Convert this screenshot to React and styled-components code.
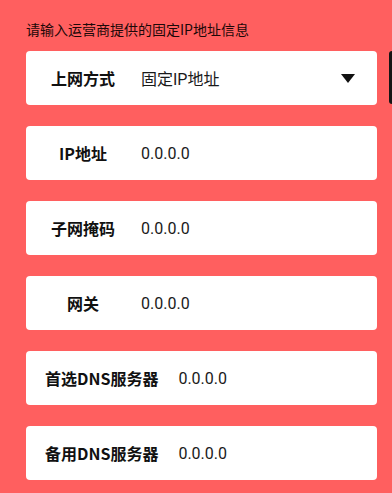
import React from 'react';
import styled, { createGlobalStyle } from 'styled-components';

const GlobalStyle = createGlobalStyle`
	html, body {
		margin: 0;
		padding: 0;
		background: #ff5f5f;
	}
	body {
		font-family: Roboto, "Noto Sans CJK SC", sans-serif;
	}
`;

const Page = styled.div`
	position: relative;
	min-height: 493px;
	box-sizing: border-box;
	padding: 19px 15px 0 26px;
	background: #ff5f5f;
`;

const Hint = styled.div`
	font-family: "Noto Sans CJK SC", sans-serif;
	font-size: 14px;
	line-height: 20px;
	color: #1c0808;
	margin-bottom: 12px;
`;

const Form = styled.div`
	display: flex;
	flex-direction: column;
	gap: 21px;
`;

const Card = styled.div`
	display: flex;
	align-items: center;
	height: 54px;
	padding: 0 22px 0 7px;
	background: #fff;
	border-radius: 4px;
`;

const Label = styled.div`
	min-width: 100px;
	box-sizing: border-box;
	padding: 0 12px;
	text-align: center;
	font-family: "Noto Sans CJK SC", sans-serif;
	font-weight: bold;
	font-size: 16px;
	color: #111;
	white-space: nowrap;
`;

const Value = styled.div`
	flex: 1;
	margin-left: 8px;
	font-size: 16px;
	color: #1a1a1a;
`;

const Arrow = styled.div`
	width: 0;
	height: 0;
	border-left: 7px solid transparent;
	border-right: 7px solid transparent;
	border-top: 9px solid #111;
`;

const SideHandle = styled.div`
	position: absolute;
	right: 0;
	top: 51px;
	width: 3px;
	height: 53px;
	background: #151515;
	border-radius: 3px 0 0 3px;
`;

const fields = [
	{ label: 'IP地址', value: '0.0.0.0' },
	{ label: '子网掩码', value: '0.0.0.0' },
	{ label: '网关', value: '0.0.0.0' },
	{ label: '首选DNS服务器', value: '0.0.0.0' },
	{ label: '备用DNS服务器', value: '0.0.0.0' },
];

const App = () => {
	return (
		<>
			<GlobalStyle />
			<Page>
				<Hint>请输入运营商提供的固定IP地址信息</Hint>
				<Form>
					<Card>
						<Label>上网方式</Label>
						<Value>固定IP地址</Value>
						<Arrow />
					</Card>
					{fields.map((f) => (
						<Card key={f.label}>
							<Label>{f.label}</Label>
							<Value>{f.value}</Value>
						</Card>
					))}
				</Form>
				<SideHandle />
			</Page>
		</>
	);
};

export default App;
